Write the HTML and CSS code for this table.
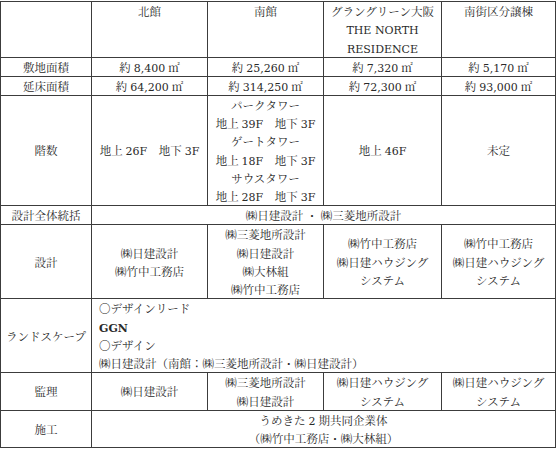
FILE: index.html
```html
<!DOCTYPE html>
<html lang="ja">
<head>
<meta charset="utf-8">
<link rel="stylesheet" href="styles.css">
</head>
<body>
<table class="spec">
  <colgroup>
    <col class="c1"><col class="c2"><col class="c3"><col class="c4"><col class="c5">
  </colgroup>
  <tr class="head">
    <td></td>
    <td>北館</td>
    <td>南館</td>
    <td>グラングリーン大阪<br><span class="lat">THE NORTH</span><br><span class="lat">RESIDENCE</span></td>
    <td>南街区分譲棟</td>
  </tr>
  <tr class="one">
    <td>敷地面積</td>
    <td>約 <span class="lat">8,400</span> ㎡</td>
    <td>約 <span class="lat">25,260</span> ㎡</td>
    <td>約 <span class="lat">7,320</span> ㎡</td>
    <td>約 <span class="lat">5,170</span> ㎡</td>
  </tr>
  <tr class="one">
    <td>延床面積</td>
    <td>約 <span class="lat">64,200</span> ㎡</td>
    <td>約 <span class="lat">314,250</span> ㎡</td>
    <td>約 <span class="lat">72,300</span> ㎡</td>
    <td>約 <span class="lat">93,000</span> ㎡</td>
  </tr>
  <tr>
    <td>階数</td>
    <td>地上 <span class="lat">26F</span>　地下 <span class="lat">3F</span></td>
    <td>パークタワー<br>地上 <span class="lat">39F</span>　地下 <span class="lat">3F</span><br>ゲートタワー<br>地上 <span class="lat">18F</span>　地下 <span class="lat">3F</span><br>サウスタワー<br>地上 <span class="lat">28F</span>　地下 <span class="lat">3F</span></td>
    <td>地上 <span class="lat">46F</span></td>
    <td>未定</td>
  </tr>
  <tr class="one">
    <td>設計全体統括</td>
    <td colspan="4">㈱日建設計 ・ ㈱三菱地所設計</td>
  </tr>
  <tr>
    <td>設計</td>
    <td>㈱日建設計<br>㈱竹中工務店</td>
    <td>㈱三菱地所設計<br>㈱日建設計<br>㈱大林組<br>㈱竹中工務店</td>
    <td>㈱竹中工務店<br>㈱日建ハウジング<br>システム</td>
    <td>㈱竹中工務店<br>㈱日建ハウジング<br>システム</td>
  </tr>
  <tr>
    <td>ランドスケープ</td>
    <td colspan="4" class="left">〇デザインリード<br><span class="lat bold">GGN</span><br>〇デザイン<br>㈱日建設計（南館：㈱三菱地所設計・㈱日建設計）</td>
  </tr>
  <tr>
    <td>監理</td>
    <td>㈱日建設計</td>
    <td>㈱三菱地所設計<br>㈱日建設計</td>
    <td>㈱日建ハウジング<br>システム</td>
    <td>㈱日建ハウジング<br>システム</td>
  </tr>
  <tr>
    <td>施工</td>
    <td colspan="4">うめきた <span class="lat">2</span> 期共同企業体<br>（㈱竹中工務店・㈱大林組）</td>
  </tr>
</table>
</body>
</html>
```

FILE: styles.css
```css
html, body {
  margin: 0;
  padding: 0;
  background: #ffffff;
}

body {
  padding-top: 1px;
}

.spec {
  border-collapse: collapse;
  table-layout: fixed;
  width: 555px;
  font-family: "Noto Serif CJK JP", "Noto Sans CJK JP", serif;
  font-size: 11.5px;
  line-height: 18.25px;
  color: #2a2a2a;
}

.spec .c1 { width: 91px; }
.spec .c2 { width: 116px; }
.spec .c3 { width: 116px; }
.spec .c4 { width: 118px; }
.spec .c5 { width: 114px; }

.spec td {
  border: 1px solid #3c3c3c;
  padding: 0;
  text-align: center;
  vertical-align: middle;
  white-space: nowrap;
  overflow: hidden;
}

.spec tr.head td {
  vertical-align: top;
  height: 54px;
}

.spec tr.one td {
  height: 18px;
  line-height: 18px;
}

.spec td.left {
  text-align: left;
  padding-left: 7px;
}

.lat {
  font-family: "DejaVu Serif", "Liberation Serif", serif;
  font-size: 11px;
  line-height: 1;
}

.bold {
  font-weight: bold;
}
```
